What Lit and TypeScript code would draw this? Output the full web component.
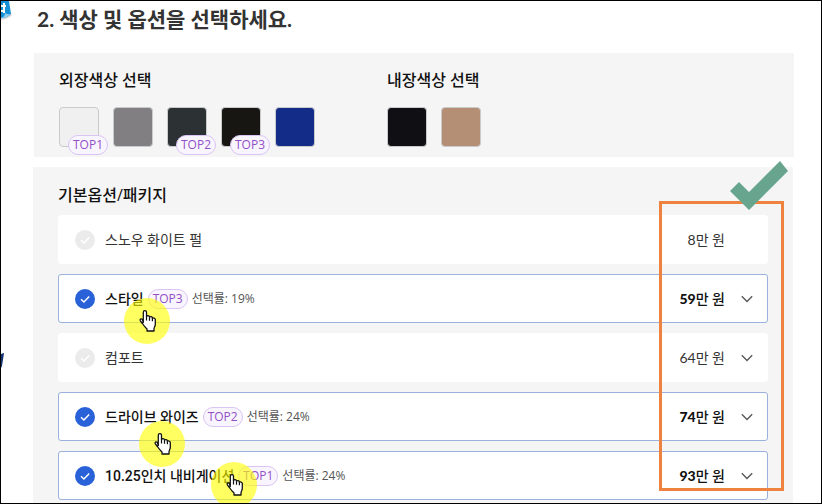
import { LitElement, html, css, svg, nothing } from "lit";
import { customElement } from "lit/decorators.js";
import { classMap } from "lit/directives/class-map.js";
import { styleMap } from "lit/directives/style-map.js";

interface Swatch {
  name: string;
  color: string;
  top?: string;
}

interface Option {
  id: string;
  name: string;
  price: string;
  checked?: boolean;
  top?: string;
  rate?: string;
  expandable?: boolean;
  pointer?: { left: number; top: number };
}

const exterior: Swatch[] = [
  { name: "화이트", color: "#f0f0f0", top: "TOP1" },
  { name: "그레이", color: "#817f81" },
  { name: "다크 그레이", color: "#2c3134", top: "TOP2" },
  { name: "블랙", color: "#171613", top: "TOP3" },
  { name: "블루", color: "#132c88" },
];

const interior: Swatch[] = [
  { name: "블랙", color: "#0f0f14" },
  { name: "브라운", color: "#b48e75" },
];

const options: Option[] = [
  { id: "pearl", name: "스노우 화이트 펄", price: "8" },
  { id: "style", name: "스타일", price: "59", checked: true, top: "TOP3", rate: "19%", expandable: true, pointer: { left: 65, top: 23 } },
  { id: "comfort", name: "컴포트", price: "64", expandable: true },
  { id: "drive", name: "드라이브 와이즈", price: "74", checked: true, top: "TOP2", rate: "24%", expandable: true, pointer: { left: 80, top: 28 } },
  { id: "navi", name: "10.25인치 내비게이션", price: "93", checked: true, top: "TOP1", rate: "24%", expandable: true, pointer: { left: 152, top: 10 } },
];

const hand = svg`
  <path d="M19.300 24.500V14.200c0-2.200 3.200-2.200 3.200 0v4.300c.3-1.300 2.800-1.200 3 .3v.5c.5-1.100 2.700-.9 2.900.5v.7c.7-1 2.700-.6 2.900.9v5.100c0 1.700-1.300 2.900-1.300 4.500V33h-7v-2c-1.600-1.600-3.200-3.400-4.600-5.500l-2-2.700c-1-1.500.8-2.500 2-1.300z"
    fill="#fff" stroke="#111" stroke-width="1.300" stroke-linejoin="round"/>
  <path d="M22.500 18.500v4M25.500 19.200v3.600M28.400 20.500v2.800" fill="none" stroke="#111" stroke-width="1.200"/>
`;

@customElement("app-root")
export class AppRoot extends LitElement {
  static styles = css`
    :host {
      display: block;
      box-sizing: border-box;
      min-height: 100vh;
      position: relative;
      overflow: hidden;
      border: 1px solid #000;
      background: #fff;
      color: #111;
      font-family: "Open Sans", "Noto Sans CJK KR", sans-serif;
      font-size: 14px;
      line-height: 20px;
    }
    h1, h2 { margin: 0; }
    h1 {
      padding: 4px 36px 20px;
      font-family: Lato, "Noto Sans CJK KR", sans-serif;
      font-size: 21px;
      line-height: 28px;
      font-weight: 700;
      color: #333;
    }
    h2 {
      font-size: 16px;
      line-height: 24px;
      font-weight: 500;
    }
    .panel {
      margin: 0 28px 10px 32px;
      padding: 0 25px;
      background: #f5f5f5;
    }
    .colors {
      display: grid;
      grid-template-columns: 328px 1fr;
      margin-left: 33px;
      margin-right: 27px;
      padding-top: 15px;
      padding-bottom: 10px;
    }
    .swatches {
      display: flex;
      gap: 14px;
      padding-top: 15px;
    }
    .swatch { position: relative; width: 40px; height: 40px; }
    .swatch input {
      appearance: none;
      display: block;
      box-sizing: border-box;
      width: 40px;
      height: 40px;
      margin: 0;
      border: 1px solid #c9cacc;
      border-radius: 4px;
    }
    .pill {
      box-sizing: border-box;
      display: inline-block;
      width: 40px;
      height: 20px;
      border: 1px solid #d9c4f4;
      border-radius: 10px;
      background: #f9f5ff;
      color: #9350c4;
      font-size: 12px;
      line-height: 18px;
      text-align: center;
    }
    .swatch .pill { position: absolute; left: 9px; top: 28px; }
    .options { position: relative; margin-bottom: 0; padding-top: 16px; padding-bottom: 3px; }
    ul {
      display: grid;
      gap: 10px;
      margin: 0;
      padding: 8px 0 0;
      list-style: none;
    }
    .card {
      position: relative;
      box-sizing: border-box;
      display: flex;
      align-items: center;
      min-height: 49px;
      padding: 0 10px 0 16px;
      border: 1px solid #fff;
      border-radius: 3px;
      background: #fff;
      color: #333;
    }
    .card.on { border-color: #9ab1dd; color: #111; }
    .tick { display: grid; width: 20px; height: 20px; }
    .tick input, .tick svg { grid-area: 1 / 1; width: 20px; height: 20px; }
    .tick input {
      appearance: none;
      margin: 0;
      border-radius: 50%;
      background: #ebebeb;
    }
    .tick input:checked { background: #2861d8; }
    .tick svg { pointer-events: none; }
    .name { margin-left: 10px; font-family: Roboto, "Noto Sans CJK KR", sans-serif; }
    .on .name { font-weight: 500; }
    .card .pill { margin-left: 4px; }
    .rate { margin-left: 4px; font-size: 12px; color: #555; }
    .price { margin-left: auto; font-family: Lato, "Noto Sans CJK KR", sans-serif; }
    .on .price { font-weight: 500; }
    .price b { font-weight: 400; }
    .on .price b { font-weight: 900; }
    .more {
      display: grid;
      place-items: center;
      width: 20px;
      height: 20px;
      margin-left: 12px;
      padding: 0;
      border: 0;
      background: none;
    }
    .more.blank { visibility: hidden; }
    .pointer { position: absolute; z-index: 1; pointer-events: none; }
    .frame {
      position: absolute;
      top: 34px;
      right: 9px;
      bottom: 12px;
      width: 125px;
      box-sizing: border-box;
      border: 3px solid #ee833f;
      pointer-events: none;
    }
    .mark { position: absolute; top: -6px; right: 5px; pointer-events: none; }
    .corner { position: absolute; left: 0; top: 0; }
    .edge { position: absolute; left: 0; top: 352px; }
  `;

  private swatches(group: string, items: Swatch[]) {
    return html`<div class="swatches" role="radiogroup" aria-labelledby=${group}>
      ${items.map(
        (s) => html`<label class="swatch">
          <input type="radio" name=${group} aria-label=${s.name}
            style=${styleMap({ backgroundColor: s.color })} />
          ${s.top ? html`<span class="pill">${s.top}</span>` : nothing}
        </label>`,
      )}
    </div>`;
  }

  private row(o: Option) {
    return html`<li class=${classMap({ card: true, on: !!o.checked })}>
      <span class="tick">
        <input type="checkbox" id=${o.id} .checked=${!!o.checked} />
        <svg viewBox="0 0 20 20" aria-hidden="true">
          <path d="M6 10.200l2.900 2.800 5.300-5.500" fill="none" stroke="#fff" stroke-width="1.500" />
        </svg>
      </span>
      <label class="name" for=${o.id}>${o.name}</label>
      ${o.top ? html`<span class="pill">${o.top}</span><span class="rate">선택률: ${o.rate}</span>` : nothing}
      <span class="price"><b>${o.price}</b>만 원</span>
      <button type="button" class=${classMap({ more: true, blank: !o.expandable })} aria-label="자세히 보기">
        <svg width="12" height="8" viewBox="0 0 12 8">
          <path d="M.8 1.200L6 6.500l5.200-5.300" fill="none" stroke="#555" stroke-width="1.300" />
        </svg>
      </button>
      ${o.pointer
        ? html`<svg class="pointer" width="46" height="46" viewBox="0 0 46 46" aria-hidden="true"
            style=${styleMap({ left: `${o.pointer.left}px`, top: `${o.pointer.top}px` })}>
            <circle cx="23" cy="23" r="23" fill="#ff0" fill-opacity=".62" />
            ${hand}
          </svg>`
        : nothing}
    </li>`;
  }

  render() {
    return html`
      <svg class="corner" width="12" height="20" viewBox="0 0 12 20" aria-hidden="true">
        <path d="M0 19Q8 18 11 14L8 10 0 14z" fill="#000" opacity=".15" />
        <path d="M0 0H8L10 13Q6 17 0 17z" fill="#168fd5" />
        <path d="M0 17Q4 16 4 12Q7 14 10 13Q6 17 0 17z" fill="#8ccdf0" />
        <path d="M3 2V12M0 5H5M0 10H3" fill="none" stroke="#fff" stroke-width="2" />
      </svg>
      <svg class="edge" width="4" height="16" viewBox="0 0 4 16" aria-hidden="true">
        <path d="M0 1L3 0 1 13 0 15z" fill="#12306f" />
      </svg>
      <h1>2. 색상 및 옵션을 선택하세요.</h1>
      <section class="panel colors">
        <div>
          <h2 id="exterior">외장색상 선택</h2>
          ${this.swatches("exterior", exterior)}
        </div>
        <div>
          <h2 id="interior">내장색상 선택</h2>
          ${this.swatches("interior", interior)}
        </div>
      </section>
      <section class="panel options">
        <h2>기본옵션/패키지</h2>
        <ul>${options.map((o) => this.row(o))}</ul>
        <div class="frame"></div>
        <svg class="mark" width="58" height="49" viewBox="0 0 58 49" aria-hidden="true">
          <path d="M50 0L58 10 19 49 0 30 9 21 19 31z" fill="#68a58f" />
        </svg>
      </section>
    `;
  }
}
